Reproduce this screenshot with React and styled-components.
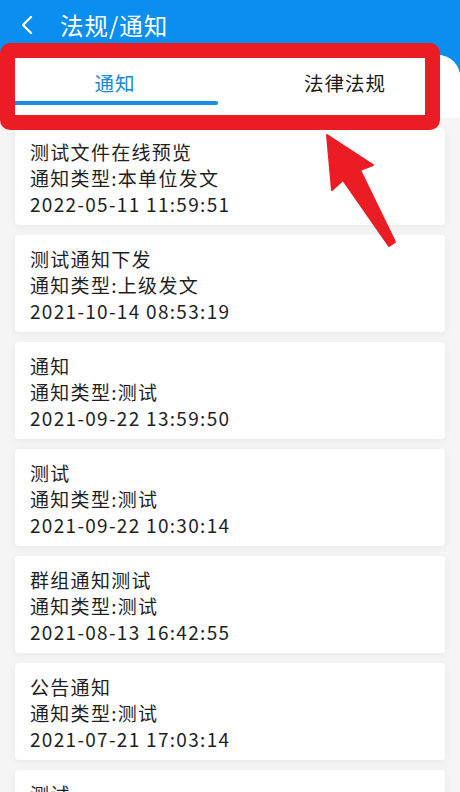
import React from 'react';
import styled, { createGlobalStyle } from 'styled-components';

const notices = [
  { title: '测试文件在线预览', type: '本单位发文', time: '2022-05-11 11:59:51' },
  { title: '测试通知下发', type: '上级发文', time: '2021-10-14 08:53:19' },
  { title: '通知', type: '测试', time: '2021-09-22 13:59:50' },
  { title: '测试', type: '测试', time: '2021-09-22 10:30:14' },
  { title: '群组通知测试', type: '测试', time: '2021-08-13 16:42:55' },
  { title: '公告通知', type: '测试', time: '2021-07-21 17:03:14' },
  { title: '测试', type: '测试', time: '2021-07-20 09:12:30' },
];

const App = () => {
  return (
    <Page>
      <GlobalStyle />
      <Header>
        <BackButton>
          <svg width="16" height="22" viewBox="0 0 16 22" fill="none">
            <path d="M12 3 L4 11 L12 19" stroke="#fff" strokeWidth="2.4" strokeLinecap="round" strokeLinejoin="round" />
          </svg>
        </BackButton>
        <Title>法规/通知</Title>
      </Header>
      <Panel>
        <Tabs>
          <Tab active>
            通知
            <Underline />
          </Tab>
          <Tab>法律法规</Tab>
        </Tabs>
        <List>
          {notices.map((n, i) => (
            <Card key={i}>
              <Line>{n.title}</Line>
              <Line>通知类型:{n.type}</Line>
              <Line>{n.time}</Line>
            </Card>
          ))}
        </List>
      </Panel>
      <Highlight />
      <Arrow width="80" height="120" viewBox="0 0 80 120">
        <polygon
          points="7,5 53,35 40,40 75,112 69,116 23,50 12,60"
          fill="#ec1c24"
          stroke="#ec1c24"
          strokeWidth="2"
          strokeLinejoin="round"
        />
      </Arrow>
    </Page>
  );
};

export default App;

const GlobalStyle = createGlobalStyle`
  html, body {
    margin: 0;
    padding: 0;
    background: #f5f5f5;
  }
  * {
    box-sizing: border-box;
  }
`;

const Page = styled.div`
  position: relative;
  width: 460px;
  height: 792px;
  overflow: hidden;
  background: #0a8ef0;
  font-family: 'Noto Sans CJK SC', 'Noto Sans', sans-serif;
  display: flex;
  flex-direction: column;
`;

const Header = styled.div`
  height: 55px;
  flex-shrink: 0;
  display: flex;
  align-items: center;
  padding: 0 0 5px 19px;
`;

const BackButton = styled.div`
  width: 24px;
  display: flex;
  align-items: center;
`;

const Title = styled.div`
  margin-left: 17px;
  color: #fff;
  font-size: 23.5px;
  letter-spacing: 1px;
`;

const Panel = styled.div`
  flex: 1;
  background: #f5f5f5;
  border-radius: 22px 22px 0 0;
  overflow: hidden;
  display: flex;
  flex-direction: column;
`;

const Tabs = styled.div`
  height: 63px;
  flex-shrink: 0;
  background: #fff;
  display: flex;
`;

const Tab = styled.div`
  position: relative;
  flex: 1;
  display: flex;
  align-items: center;
  justify-content: center;
  padding-bottom: 8px;
  font-size: 19.5px;
  letter-spacing: 1px;
  color: ${(p) => (p.active ? '#1a88e0' : '#1a1a1a')};
`;

const Underline = styled.span`
  position: absolute;
  left: 0;
  bottom: 13px;
  width: 218px;
  height: 4px;
  border-radius: 2px;
  background: #1b8be6;
`;

const List = styled.div`
  display: flex;
  flex-direction: column;
  gap: 10px;
  padding: 10px 15px;
`;

const Card = styled.div`
  height: 97px;
  flex-shrink: 0;
  background: #fff;
  border-radius: 4px;
  padding: 11px 15px 8px;
  box-shadow: 0 2px 8px rgba(0, 0, 0, 0.05);
`;

const Line = styled.div`
  font-size: 19px;
  line-height: 26px;
  letter-spacing: 1.3px;
  color: #1f1f1f;
  white-space: nowrap;
`;

const Highlight = styled.div`
  position: absolute;
  left: 0;
  top: 43px;
  width: 440px;
  height: 87px;
  border: 15px solid #ec1c24;
  border-radius: 10px;
  pointer-events: none;
`;

const Arrow = styled.svg`
  position: absolute;
  left: 320px;
  top: 130px;
`;
